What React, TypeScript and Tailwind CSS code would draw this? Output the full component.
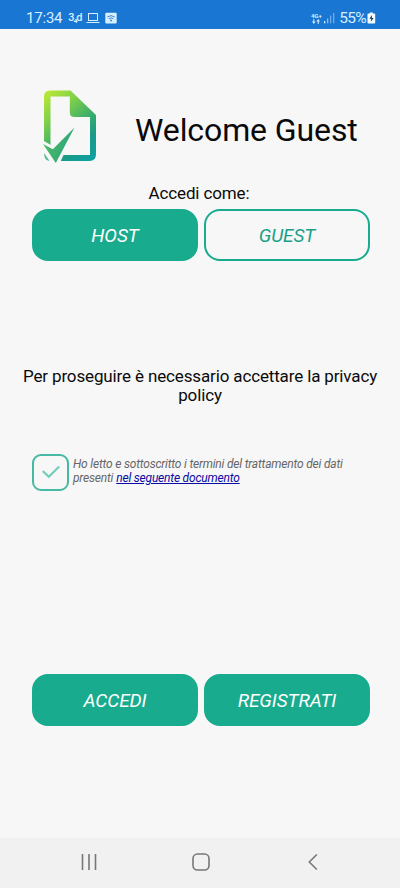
import { useState } from 'react';

function StatusBar() {
  return (
    <header className="flex h-[29px] shrink-0 items-center bg-[#1976d2] pl-[26px] pr-[24px] pt-[7px] text-[#d6efff]">
      <span className="text-[15px] leading-[22px] tracking-[-0.2px]">17:34</span>
      <span className="ml-[6px] w-[14px] whitespace-nowrap text-[11px] font-medium leading-[22px] tracking-[-1.2px]">3₄d</span>
      <svg className="ml-[4px] h-[12px] w-[14px]" viewBox="0 0 14 12" fill="none" stroke="currentColor">
        <rect x="2.5" y="1.5" width="9" height="7" />
        <path d="M0.5 10.5h13" />
      </svg>
      <svg className="ml-[5px] h-[12px] w-[12px]" viewBox="0 0 12 12">
        <rect x="0.3" y="0.8" width="11.4" height="10.6" rx="1" fill="currentColor" />
        <path d="M2.3 5Q6 2.2 9.7 5M3.8 6.7Q6 5 8.2 6.7" fill="none" stroke="#3d86cf" />
        <circle cx="6" cy="8.5" r="1" fill="#3d86cf" />
      </svg>
      <div className="ml-auto flex items-center">
        <div className="flex w-[12px] flex-col items-center">
          <span className="text-[6px] font-bold leading-[6px]">4G+</span>
          <svg className="h-[5px] w-[8px]" viewBox="0 0 8 5" fill="currentColor">
            <path d="M0 2.5h1.3V0h1v2.5h1.3L1.8 5zM4.4 2.5L6.2 0L8 2.5H6.7V5h-1V2.5z" />
          </svg>
        </div>
        <svg className="ml-[2px] h-[12px] w-[11px]" viewBox="0 0 11 12" fill="currentColor">
          <rect x="0" y="9" width="1.3" height="2.3" />
          <rect x="3" y="6.5" width="1.3" height="4.8" opacity="0.6" />
          <rect x="6" y="3.5" width="1.3" height="7.8" opacity="0.45" />
          <rect x="9" y="1" width="1.3" height="10.3" opacity="0.45" />
        </svg>
        <span className="ml-[4px] text-[15.5px] leading-[22px] tracking-[-0.7px]">55%</span>
        <svg className="ml-[1px] h-[12px] w-[9px]" viewBox="0 0 9 12">
          <path d="M2.8 1.5V.4h3v1.1h1.6q.8 0 .8.8v8.4q0 .8-.8.8H1.3q-.8 0-.8-.8V2.3q0-.8.8-.8z" fill="#f2fbff" />
          <path d="M5 3L2.4 6.8h1.8L3.8 9.8 6.6 6H4.8z" fill="#1c3550" />
        </svg>
      </div>
    </header>
  );
}

function Logo() {
  return (
    <svg className="h-[76px] w-[58px]" viewBox="0 0 58 76">
      <defs>
        <linearGradient id="page" x1="4" y1="4" x2="58" y2="66" gradientUnits="userSpaceOnUse">
          <stop offset="0" stopColor="#bdea35" />
          <stop offset="0.3" stopColor="#7fcf4b" />
          <stop offset="0.55" stopColor="#3fb068" />
          <stop offset="0.78" stopColor="#189b88" />
          <stop offset="1" stopColor="#0fa0a2" />
        </linearGradient>
        <linearGradient id="tick" x1="4" y1="50" x2="32" y2="60" gradientUnits="userSpaceOnUse">
          <stop offset="0" stopColor="#4ebe62" />
          <stop offset="1" stopColor="#2ca57c" />
        </linearGradient>
      </defs>
      <path
        d="M10 2.500H30.500L56 27V66.500Q56 73 49.500 73H10.500Q4 73 4 66.500V8.500Q4 2.500 10 2.500ZM10.500 8.500V67H50V29H34.500Q29.800 29 29.800 24.500V8.500Z"
        fill="url(#page)"
        fillRule="evenodd"
      />
      <path d="M0 51L12 57.500L28 40V58L23.500 67L20.500 73.500V76H0Z" fill="#f7f7f7" />
      <path d="M4 65L9.500 73Q4 72 4 65Z" fill="#4fb98a" />
      <path d="M3 56L12.800 61.300L34.500 39.500L15.800 75Z" fill="url(#tick)" />
    </svg>
  );
}

interface ActionButtonProps {
  label: string;
  outlined?: boolean;
  onClick?: () => void;
}

function ActionButton({ label, outlined = false, onClick }: ActionButtonProps) {
  return (
    <button
      onClick={onClick}
      className={`h-[52px] w-[166px] rounded-[16px] border-2 border-[#18ab8d] pt-[2px] text-[19px] italic leading-[22px] tracking-[-0.1px] ${
        outlined ? 'bg-transparent text-[#18a088]' : 'bg-[#18ab8d] text-white'
      }`}
    >
      {label}
    </button>
  );
}

function NavigationBar() {
  return (
    <nav className="flex h-[50px] shrink-0 items-center justify-between bg-[#f1f1f1] pb-[2px] pl-[80px] pr-[78px] text-[#777777]">
      <svg className="h-[18px] w-[18px]" viewBox="0 0 18 18" stroke="currentColor" strokeWidth="1.6">
        <path d="M2.500 1v16M9 1v16M15.500 1v16" />
      </svg>
      <svg className="h-[18px] w-[18px]" viewBox="0 0 18 18" fill="none" stroke="currentColor" strokeWidth="1.6">
        <rect x="1" y="1" width="16" height="16" rx="4.500" />
      </svg>
      <svg className="h-[18px] w-[18px]" viewBox="0 0 18 18" fill="none" stroke="currentColor" strokeWidth="1.6">
        <path d="M12.800 1.500L5.300 9L12.800 16.500" />
      </svg>
    </nav>
  );
}

export default function App() {
  const [role, setRole] = useState<'host' | 'guest'>('guest');
  const [accepted, setAccepted] = useState(true);

  return (
    <div className="flex h-[888px] w-[400px] flex-col bg-[#f7f7f7] font-['Roboto',sans-serif] text-[#0a0a0a]">
      <StatusBar />
      <main className="flex flex-1 flex-col">
        <div className="flex items-center pl-[40px] pt-[59px]">
          <Logo />
          <h1 className="ml-[37px] whitespace-nowrap pt-[7px] text-[32px] leading-[40px] tracking-[-0.1px]">
            Welcome Guest
          </h1>
        </div>

        <p className="mt-[19px] pr-[2px] text-center text-[17px] leading-[20px] tracking-[-0.12px]">Accedi come:</p>
        <div className="mt-[6px] flex gap-[6px] pl-[32px]">
          <ActionButton label="HOST" outlined={role === 'host'} onClick={() => setRole('host')} />
          <ActionButton label="GUEST" outlined={role === 'guest'} onClick={() => setRole('guest')} />
        </div>

        <p className="mt-[106px] px-[20px] text-center text-[17px] leading-[19px] tracking-[-0.14px]">
          Per proseguire è necessario accettare la privacy policy
        </p>

        <div className="mt-[49px] flex pl-[32px]">
          <button
            onClick={() => setAccepted(!accepted)}
            className="flex h-[37px] w-[37px] items-center justify-center rounded-[9px] border-2 border-[#45b9a3]"
          >
            {accepted && (
              <svg className="mb-[1px] h-[14px] w-[20px]" viewBox="0 0 20 14" fill="none" stroke="#72cdbb" strokeWidth="2.2">
                <path d="M1.800 6L7.800 11.800L18.200 1.500" />
              </svg>
            )}
          </button>
          <div className="ml-[4px] mt-[3px] text-[12px] italic leading-[14px] tracking-[-0.2px] text-[#666666]">
            <p>Ho letto e sottoscritto i termini del trattamento dei dati</p>
            <p className="flex gap-[3px]">
              presenti
              <a href="#documento" className="text-[#0a0aa5] underline">nel seguente documento</a>
            </p>
          </div>
        </div>

        <div className="mt-[183px] flex gap-[6px] pl-[32px]">
          <ActionButton label="ACCEDI" />
          <ActionButton label="REGISTRATI" />
        </div>
      </main>
      <NavigationBar />
    </div>
  );
}
